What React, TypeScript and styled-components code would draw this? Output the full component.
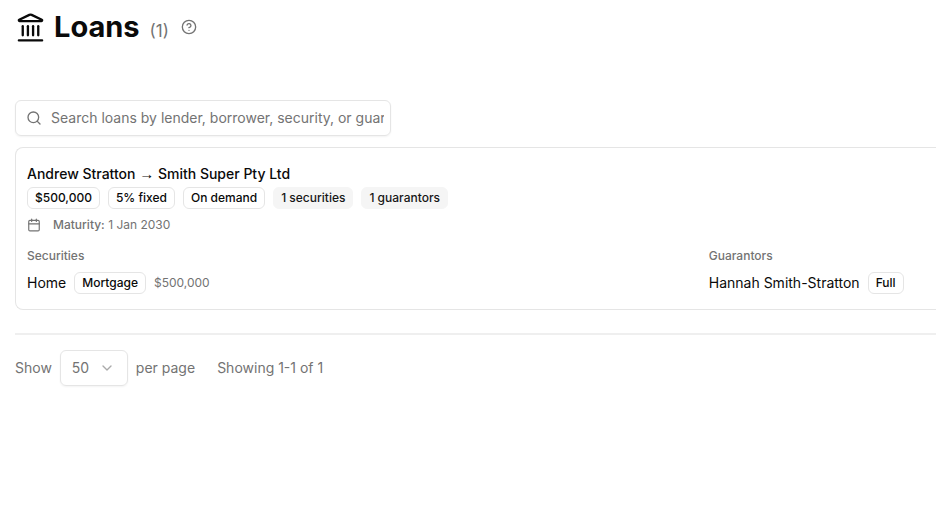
import React from "react";
import styled, { createGlobalStyle } from "styled-components";
import { Calendar, ChevronDown, CircleQuestionMark, Landmark, Search } from "lucide-react";

const GlobalStyle = createGlobalStyle`
  *, *::before, *::after { box-sizing: border-box; }
  body {
    margin: 0;
    background: #fff;
    color: #0a0a0a;
    font-family: Inter, "Liberation Sans", sans-serif;
    font-size: 14px;
    line-height: 20px;
    overflow-x: hidden;
  }
  button, input, select { font: inherit; }
`;

const Page = styled.main`
  padding: 8px 0 24px 15px;
`;

const Header = styled.header`
  display: flex;
  align-items: center;
  height: 38px;
  margin-bottom: 54px;
`;

const Title = styled.h1`
  margin: 0 10px 0 8px;
  font-size: 29px;
  line-height: 36px;
  font-weight: 700;
`;

const Count = styled.span`
  margin: 8px 12px 0 0;
  font-size: 17px;
  line-height: 24px;
  color: #737373;
`;

const HelpButton = styled.button`
  display: flex;
  padding: 0;
  border: 0;
  background: none;
  color: #737373;
`;

const SearchField = styled.label`
  display: flex;
  align-items: center;
  gap: 9px;
  width: 376px;
  max-width: 100%;
  height: 36px;
  padding: 0 6px 0 10px;
  border: 1px solid #e5e5e5;
  border-radius: 6px;
  box-shadow: 0 1px 2px rgba(0, 0, 0, 0.05);
  color: #737373;

  svg { flex: none; }
`;

const SearchInput = styled.input`
  flex: 1;
  min-width: 0;
  padding: 0;
  border: 0;
  outline: 0;
  background: none;
  color: #0a0a0a;

  &::placeholder { color: #737373; opacity: 1; }
`;

const Card = styled.article`
  margin-top: 11px;
  padding: 16px 0 15px 11px;
  border: 1px solid #e5e5e5;
  border-right: 0;
  border-radius: 8px 0 0 8px;
`;

const LoanName = styled.h2`
  margin: 0 0 3px;
  font-size: 14px;
  line-height: 20px;
  font-weight: 500;
`;

const Arrow = styled.span`
  font-family: "Liberation Serif", serif;
  font-size: 15px;
  font-weight: 400;
`;

const Row = styled.div`
  display: flex;
  align-items: center;
  flex-wrap: wrap;
  gap: 8px;
`;

const Badge = styled.span<{ $filled?: boolean }>`
  height: 22px;
  padding: 0 7px;
  border: 1px solid ${(p) => (p.$filled ? "#f5f5f5" : "#e5e5e5")};
  border-radius: 6px;
  background: ${(p) => (p.$filled ? "#f5f5f5" : "transparent")};
  color: ${(p) => (p.$filled ? "#171717" : "#0a0a0a")};
  font-size: 12px;
  line-height: 20px;
  font-weight: 500;
  white-space: nowrap;
`;

const Maturity = styled.div`
  display: flex;
  align-items: center;
  gap: 12px;
  margin-top: 8px;
  font-size: 12px;
  line-height: 16px;
  color: #737373;
`;

const Label = styled.span`
  font-weight: 500;
`;

const Details = styled.div`
  display: grid;
  grid-template-columns: 3fr 1fr;
  margin-top: 15px;
`;

const SectionTitle = styled.h3`
  margin: 0 0 8px;
  font-size: 12px;
  line-height: 16px;
  font-weight: 500;
  color: #737373;
`;

const Amount = styled.span`
  font-size: 12px;
  color: #737373;
`;

const Pagination = styled.footer`
  display: flex;
  align-items: center;
  gap: 8px;
  margin-top: 23px;
  padding-top: 15px;
  border-top: 2px solid #efefef;
  color: #737373;
`;

const SelectBox = styled.span`
  display: grid;
  align-items: center;
  width: 68px;
  height: 36px;
  border: 1px solid #e5e5e5;
  border-radius: 6px;
  box-shadow: 0 1px 2px rgba(0, 0, 0, 0.05);

  & > * { grid-area: 1 / 1; }
  svg { justify-self: end; margin-right: 12px; opacity: 0.6; pointer-events: none; }
`;

const PageSize = styled.select`
  width: 100%;
  height: 100%;
  padding: 0 11px;
  border: 0;
  outline: 0;
  appearance: none;
  background: none;
  color: inherit;
`;

const Range = styled.span`
  margin-left: 14px;
`;

const terms = ["$500,000", "5% fixed", "On demand"];
const counts = ["1 securities", "1 guarantors"];

export default function App() {
  return (
    <>
      <GlobalStyle />
      <Page>
        <Header>
          <Landmark size={31} strokeWidth={1.8} />
          <Title>Loans</Title>
          <Count>(1)</Count>
          <HelpButton type="button" aria-label="About loans">
            <CircleQuestionMark size={16} />
          </HelpButton>
        </Header>

        <SearchField>
          <Search size={16} />
          <SearchInput
            type="text"
            aria-label="Search loans"
            placeholder="Search loans by lender, borrower, security, or guarantor..."
          />
        </SearchField>

        <Card>
          <LoanName>Andrew Stratton <Arrow>→</Arrow> Smith Super Pty Ltd</LoanName>
          <Row>
            {terms.map((t) => <Badge key={t}>{t}</Badge>)}
            {counts.map((c) => <Badge key={c} $filled>{c}</Badge>)}
          </Row>
          <Maturity>
            <Calendar size={14} />
            <span><Label>Maturity:</Label> 1 Jan 2030</span>
          </Maturity>
          <Details>
            <section>
              <SectionTitle>Securities</SectionTitle>
              <Row>
                <span>Home</span>
                <Badge>Mortgage</Badge>
                <Amount>$500,000</Amount>
              </Row>
            </section>
            <section>
              <SectionTitle>Guarantors</SectionTitle>
              <Row>
                <span>Hannah Smith-Stratton</span>
                <Badge>Full</Badge>
              </Row>
            </section>
          </Details>
        </Card>

        <Pagination>
          <label htmlFor="page-size">Show</label>
          <SelectBox>
            <PageSize id="page-size" defaultValue="50">
              <option>10</option>
              <option>25</option>
              <option>50</option>
              <option>100</option>
            </PageSize>
            <ChevronDown size={16} />
          </SelectBox>
          <span>per page</span>
          <Range>Showing 1-1 of 1</Range>
        </Pagination>
      </Page>
    </>
  );
}
